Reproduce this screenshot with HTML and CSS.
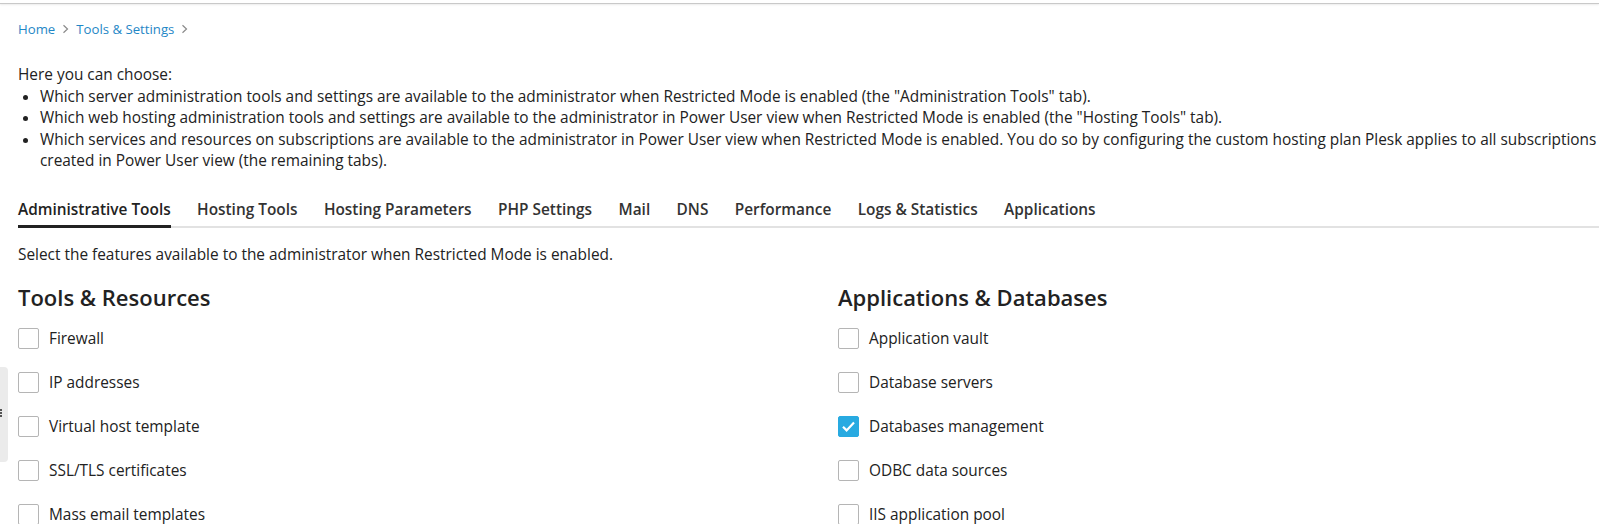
FILE: index.html
```html
<!DOCTYPE html>
<html lang="en">
<head>
<meta charset="utf-8">
<title>Tools &amp; Settings</title>
<link rel="stylesheet" href="styles.css">
</head>
<body>
<div class="topbar"></div>
<div class="side-handle"><span class="handle-mark"></span></div>
<main class="page">
  <nav class="breadcrumbs">
    <a href="#" class="crumb">Home</a>
    <span class="sep"><svg width="7" height="10" viewBox="0 0 7 10"><path d="M1.5 1.2l4 3.8-4 3.8" fill="none" stroke="#8a8a8a" stroke-width="1.2"/></svg></span>
    <a href="#" class="crumb">Tools &amp; Settings</a>
    <span class="sep"><svg width="7" height="10" viewBox="0 0 7 10"><path d="M1.5 1.2l4 3.8-4 3.8" fill="none" stroke="#8a8a8a" stroke-width="1.2"/></svg></span>
  </nav>

  <div class="intro">
    <p class="intro-lead">Here you can choose:</p>
    <ul class="intro-list">
      <li>Which server administration tools and settings are available to the administrator when Restricted Mode is enabled (the "Administration Tools" tab).</li>
      <li>Which web hosting administration tools and settings are available to the administrator in Power User view when Restricted Mode is enabled (the "Hosting Tools" tab).</li>
      <li>Which services and resources on subscriptions are available to the administrator in Power User view when Restricted Mode is enabled. You do so by configuring the custom hosting plan Plesk applies to all subscriptions created in Power User view (the remaining tabs).</li>
    </ul>
  </div>

  <div class="tabs">
    <a href="#" class="tab active">Administrative Tools</a>
    <a href="#" class="tab">Hosting Tools</a>
    <a href="#" class="tab">Hosting Parameters</a>
    <a href="#" class="tab">PHP Settings</a>
    <a href="#" class="tab">Mail</a>
    <a href="#" class="tab">DNS</a>
    <a href="#" class="tab">Performance</a>
    <a href="#" class="tab">Logs &amp; Statistics</a>
    <a href="#" class="tab">Applications</a>
  </div>

  <p class="hint">Select the features available to the administrator when Restricted Mode is enabled.</p>

  <div class="sections">
    <section class="section">
      <h2 class="section-title">Tools &amp; Resources</h2>
      <div class="options">
        <label class="option"><span class="box"></span>Firewall</label>
        <label class="option"><span class="box"></span>IP addresses</label>
        <label class="option"><span class="box"></span>Virtual host template</label>
        <label class="option"><span class="box"></span>SSL/TLS certificates</label>
        <label class="option"><span class="box"></span>Mass email templates</label>
      </div>
    </section>
    <section class="section">
      <h2 class="section-title">Applications &amp; Databases</h2>
      <div class="options">
        <label class="option"><span class="box"></span>Application vault</label>
        <label class="option"><span class="box"></span>Database servers</label>
        <label class="option"><span class="box checked"><svg width="15" height="13" viewBox="0 0 15 13"><path d="M2 6.8l3.6 3.6L13 2.6" fill="none" stroke="#fff" stroke-width="2.2"/></svg></span>Databases management</label>
        <label class="option"><span class="box"></span>ODBC data sources</label>
        <label class="option"><span class="box"></span>IIS application pool</label>
      </div>
    </section>
  </div>
</main>
</body>
</html>
```

FILE: styles.css
```css
html, body {
  margin: 0;
  padding: 0;
}
body {
  font-family: "Open Sans", "Noto Sans", sans-serif;
  font-size: 15.4px;
  line-height: 21.5px;
  color: #222;
  background: #fff;
  overflow: hidden;
}
.topbar {
  height: 3px;
  border-bottom: 1px solid #c9c9c9;
  box-shadow: 0 1px 2px rgba(0, 0, 0, 0.08);
}
.side-handle {
  position: absolute;
  left: 0;
  top: 367px;
  width: 8px;
  height: 95px;
  background: #ebebeb;
  border-radius: 0 4px 4px 0;
}
.handle-mark {
  position: absolute;
  left: 0;
  top: 42px;
  width: 2px;
  height: 8px;
  border-left: 2px dotted #555;
}
.page {
  padding: 0 0 0 18px;
}
.breadcrumbs {
  display: flex;
  align-items: center;
  gap: 7px;
  height: 18px;
  padding-top: 16px;
  font-size: 13.2px;
  line-height: 18px;
}
.crumb {
  color: #1f87c6;
  text-decoration: none;
}
.sep {
  display: flex;
  align-items: center;
}
.intro {
  margin-top: 26px;
  width: 1600px;
}
.intro-lead {
  margin: 0;
}
.intro-list {
  margin: 0;
  padding-left: 22px;
}
.tabs {
  display: flex;
  gap: 26.4px;
  margin-top: 24px;
  border-bottom: 2px solid #e2e2e2;
}
.tab {
  font-weight: 600;
  color: #333;
  text-decoration: none;
  padding: 3px 0 5px;
  margin-bottom: -2px;
  border-bottom: 3px solid transparent;
}
.tab.active {
  color: #222;
  border-bottom-color: #222;
}
.hint {
  margin: 15.5px 0 0;
}
.sections {
  display: grid;
  grid-template-columns: 820px 1fr;
  margin-top: 18px;
}
.section-title {
  margin: 0;
  font-size: 22px;
  line-height: 28px;
  font-weight: 600;
  color: #222;
}
.options {
  display: flex;
  flex-direction: column;
  gap: 23px;
  margin-top: 17.3px;
}
.option {
  display: flex;
  align-items: center;
  gap: 10px;
  height: 21px;
}
.box {
  box-sizing: border-box;
  width: 21px;
  height: 21px;
  border: 1px solid #b5b5b5;
  border-radius: 2px;
  background: #fff;
  display: flex;
  align-items: center;
  justify-content: center;
  flex: none;
}
.box.checked {
  background: #28aae1;
  border-color: #28aae1;
}
```
